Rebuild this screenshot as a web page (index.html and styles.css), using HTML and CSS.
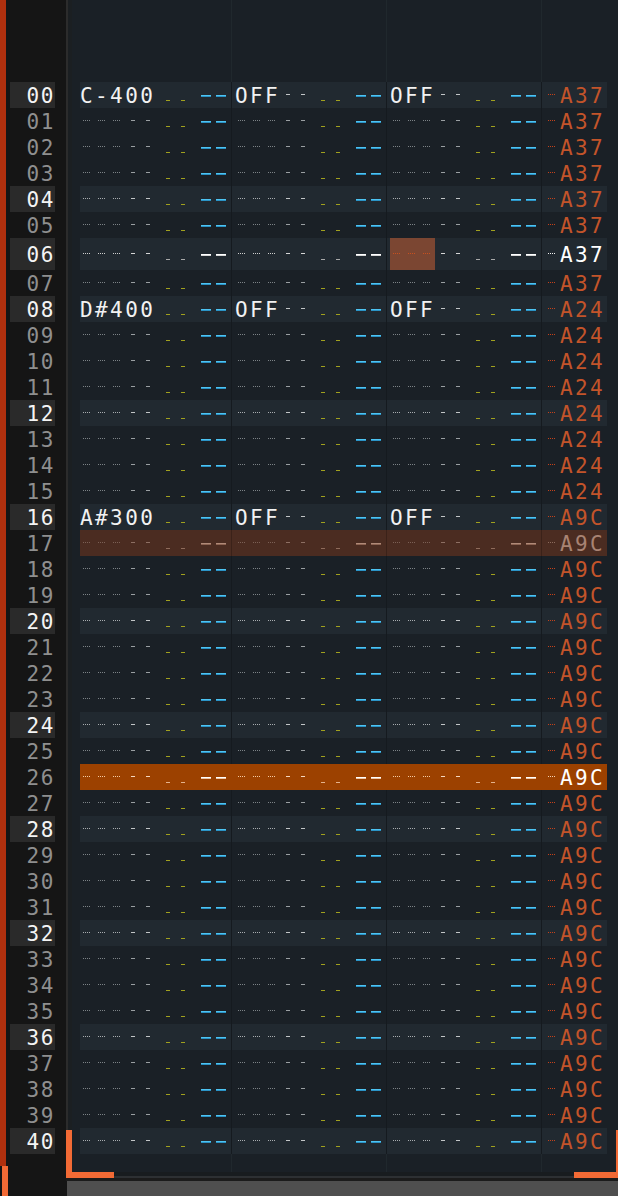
FILE: index.html
```html
<!DOCTYPE html>
<html>
<head>
<meta charset="utf-8">
<link rel="stylesheet" href="styles.css">
</head>
<body>
<div class="app">
  <div class="leftbar"><div class="red"></div><div class="orange"></div></div>
  <div class="rownums">
    <div class="rn hl">00</div><div class="rn">01</div><div class="rn">02</div><div class="rn">03</div>
    <div class="rn hl">04</div><div class="rn">05</div><div class="rn hl tall">06</div><div class="rn">07</div>
    <div class="rn hl">08</div><div class="rn">09</div><div class="rn">10</div><div class="rn">11</div>
    <div class="rn hl">12</div><div class="rn">13</div><div class="rn">14</div><div class="rn">15</div>
    <div class="rn hl">16</div><div class="rn">17</div><div class="rn">18</div><div class="rn">19</div>
    <div class="rn hl">20</div><div class="rn">21</div><div class="rn">22</div><div class="rn">23</div>
    <div class="rn hl">24</div><div class="rn">25</div><div class="rn">26</div><div class="rn">27</div>
    <div class="rn hl">28</div><div class="rn">29</div><div class="rn">30</div><div class="rn">31</div>
    <div class="rn hl">32</div><div class="rn">33</div><div class="rn">34</div><div class="rn">35</div>
    <div class="rn hl">36</div><div class="rn">37</div><div class="rn">38</div><div class="rn">39</div>
    <div class="rn hl">40</div>
  </div>
  <div class="right">
    <div class="main">
      <div class="divider"></div>
      <div class="gutter"></div>
      <div class="pattern">
        <div class="row hl"><div class="c1 n">C-400</div><div class="c o">OFF</div><div class="c o">OFF</div><div class="fx">A37</div></div>
        <div class="row"><div class="c1 e"></div><div class="c e"></div><div class="c e"></div><div class="fx">A37</div></div>
        <div class="row"><div class="c1 e"></div><div class="c e"></div><div class="c e"></div><div class="fx">A37</div></div>
        <div class="row"><div class="c1 e"></div><div class="c e"></div><div class="c e"></div><div class="fx">A37</div></div>
        <div class="row hl"><div class="c1 e"></div><div class="c e"></div><div class="c e"></div><div class="fx">A37</div></div>
        <div class="row"><div class="c1 e"></div><div class="c e"></div><div class="c e"></div><div class="fx">A37</div></div>
        <div class="row cur"><div class="c1 e"></div><div class="c e"></div><div class="c e cursor"></div><div class="fx">A37</div></div>
        <div class="row"><div class="c1 e"></div><div class="c e"></div><div class="c e"></div><div class="fx">A37</div></div>
        <div class="row hl"><div class="c1 n">D#400</div><div class="c o">OFF</div><div class="c o">OFF</div><div class="fx">A24</div></div>
        <div class="row"><div class="c1 e"></div><div class="c e"></div><div class="c e"></div><div class="fx">A24</div></div>
        <div class="row"><div class="c1 e"></div><div class="c e"></div><div class="c e"></div><div class="fx">A24</div></div>
        <div class="row"><div class="c1 e"></div><div class="c e"></div><div class="c e"></div><div class="fx">A24</div></div>
        <div class="row hl"><div class="c1 e"></div><div class="c e"></div><div class="c e"></div><div class="fx">A24</div></div>
        <div class="row"><div class="c1 e"></div><div class="c e"></div><div class="c e"></div><div class="fx">A24</div></div>
        <div class="row"><div class="c1 e"></div><div class="c e"></div><div class="c e"></div><div class="fx">A24</div></div>
        <div class="row"><div class="c1 e"></div><div class="c e"></div><div class="c e"></div><div class="fx">A24</div></div>
        <div class="row hl"><div class="c1 n">A#300</div><div class="c o">OFF</div><div class="c o">OFF</div><div class="fx">A9C</div></div>
        <div class="row sel"><div class="c1 e"></div><div class="c e"></div><div class="c e"></div><div class="fx">A9C</div></div>
        <div class="row"><div class="c1 e"></div><div class="c e"></div><div class="c e"></div><div class="fx">A9C</div></div>
        <div class="row"><div class="c1 e"></div><div class="c e"></div><div class="c e"></div><div class="fx">A9C</div></div>
        <div class="row hl"><div class="c1 e"></div><div class="c e"></div><div class="c e"></div><div class="fx">A9C</div></div>
        <div class="row"><div class="c1 e"></div><div class="c e"></div><div class="c e"></div><div class="fx">A9C</div></div>
        <div class="row"><div class="c1 e"></div><div class="c e"></div><div class="c e"></div><div class="fx">A9C</div></div>
        <div class="row"><div class="c1 e"></div><div class="c e"></div><div class="c e"></div><div class="fx">A9C</div></div>
        <div class="row hl"><div class="c1 e"></div><div class="c e"></div><div class="c e"></div><div class="fx">A9C</div></div>
        <div class="row"><div class="c1 e"></div><div class="c e"></div><div class="c e"></div><div class="fx">A9C</div></div>
        <div class="row play"><div class="c1 e"></div><div class="c e"></div><div class="c e"></div><div class="fx">A9C</div></div>
        <div class="row"><div class="c1 e"></div><div class="c e"></div><div class="c e"></div><div class="fx">A9C</div></div>
        <div class="row hl"><div class="c1 e"></div><div class="c e"></div><div class="c e"></div><div class="fx">A9C</div></div>
        <div class="row"><div class="c1 e"></div><div class="c e"></div><div class="c e"></div><div class="fx">A9C</div></div>
        <div class="row"><div class="c1 e"></div><div class="c e"></div><div class="c e"></div><div class="fx">A9C</div></div>
        <div class="row"><div class="c1 e"></div><div class="c e"></div><div class="c e"></div><div class="fx">A9C</div></div>
        <div class="row hl"><div class="c1 e"></div><div class="c e"></div><div class="c e"></div><div class="fx">A9C</div></div>
        <div class="row"><div class="c1 e"></div><div class="c e"></div><div class="c e"></div><div class="fx">A9C</div></div>
        <div class="row"><div class="c1 e"></div><div class="c e"></div><div class="c e"></div><div class="fx">A9C</div></div>
        <div class="row"><div class="c1 e"></div><div class="c e"></div><div class="c e"></div><div class="fx">A9C</div></div>
        <div class="row hl"><div class="c1 e"></div><div class="c e"></div><div class="c e"></div><div class="fx">A9C</div></div>
        <div class="row"><div class="c1 e"></div><div class="c e"></div><div class="c e"></div><div class="fx">A9C</div></div>
        <div class="row"><div class="c1 e"></div><div class="c e"></div><div class="c e"></div><div class="fx">A9C</div></div>
        <div class="row"><div class="c1 e"></div><div class="c e"></div><div class="c e"></div><div class="fx">A9C</div></div>
        <div class="row hl"><div class="c1 e"></div><div class="c e"></div><div class="c e"></div><div class="fx">A9C</div></div>
      </div>
    </div>
    <div class="band band1"></div>
    <div class="band band2"></div>
    <div class="band band3"></div>
    <div class="scroll"></div>
    <div class="corner corner-bl"></div>
    <div class="corner corner-br"></div>
  </div>
</div>
</body>
</html>
```
FILE: styles.css
```css
* { box-sizing: border-box; }
html, body { margin: 0; padding: 0; }
body {
  width: 618px;
  height: 1196px;
  overflow: hidden;
  background: #151515;
  font-family: "DejaVu Sans Mono", "Liberation Mono", monospace;
}
.app { display: flex; height: 1196px; }

.leftbar { width: 8px; display: flex; flex-direction: column; }
.leftbar .red { flex: 1; background: linear-gradient(90deg, #b0300e 0 6px, #151515 6px); }
.leftbar .orange { height: 30px; background: linear-gradient(90deg, #151515 0 2px, #f26a35 2px 8px); }

.rownums { width: 58px; padding-top: 82px; padding-left: 2px; background: #151515; }
.rn {
  width: 45px;
  height: 26px;
  padding-top: 1px;
  line-height: 26px;
  text-align: right;
  font-size: 21px;
  letter-spacing: 1.6px;
  color: #8f8f8f;
}
.rn.hl { background: #2a2a2a; color: #f4f4f4; }
.rn.tall { height: 32px; line-height: 32px; }

.right { flex: 1; display: flex; flex-direction: column; position: relative; }
.main { flex: 1; display: flex; min-height: 0; }
.divider { width: 2px; background: #2c2c2c; }
.gutter { width: 4px; background: #1b1f22; }
.pattern {
  flex: 1;
  padding-top: 82px;
  padding-left: 8px;
  background:
    linear-gradient(#20282d, #20282d) 159px 0 / 1px 100% no-repeat,
    linear-gradient(#20282d, #20282d) 314px 0 / 1px 100% no-repeat,
    linear-gradient(#20282d, #20282d) 469px 0 / 1px 100% no-repeat,
    #1a2026;
}

.row {
  --bg: transparent;
  --sep: #151a1f;
  --t: 0px;
  --cdot: #7d8387;
  --cdash: #9a9fa2;
  --cvol: #a0a01e;
  --cfx1: #4ec4f2;
  --cfx2: #2b93c6;
  --cfxt: #c3542a;
  --cfxd: #c4421a;
  display: flex;
  width: 527px;
  height: 26px;
  line-height: 26px;
  background: var(--bg);
  font-size: 21px;
  letter-spacing: 2.4px;
  white-space: nowrap;
}
.row.hl { --bg: #212930; --cdot: #a9adb0; --cdash: #c2c5c7; }
.row.cur {
  --bg: #212930; --t: 3px;
  --cdot: #cfcfcf; --cdash: #d6d6d6; --cvol: #a9a9a9;
  --cfx1: #ffffff; --cfx2: #d8d8d8; --cfxt: #ffffff; --cfxd: #f2f2f2;
  height: 32px; line-height: 32px;
}
.row.sel {
  --bg: #4b2c21; --sep: #3b2219;
  --cdot: #7b6055; --cdash: #8d6f63; --cvol: #8e6b5b;
  --cfx1: #b08a78; --cfx2: #8c6352; --cfxt: #a88373; --cfxd: #8c6b5c;
}
.row.play {
  --bg: #9c4100; --sep: #9c4100;
  --cdot: #f4caa4; --cdash: #f6d8bf; --cvol: #e4b28c;
  --cfx1: #ffffff; --cfx2: #efc6a6; --cfxt: #ffffff; --cfxd: #f4d3b6;
}

.c1, .c {
  height: 100%;
  padding-top: 1px;
  color: #f2f2f2;
  --Ldots:
    repeating-linear-gradient(90deg, var(--cdot) 0 1px, transparent 1px 2px) calc(var(--o) + 6px) calc(var(--t) + 12px) / 7px 1px no-repeat,
    repeating-linear-gradient(90deg, var(--cdot) 0 1px, transparent 1px 2px) calc(var(--o) + 21px) calc(var(--t) + 12px) / 7px 1px no-repeat,
    repeating-linear-gradient(90deg, var(--cdot) 0 1px, transparent 1px 2px) calc(var(--o) + 36px) calc(var(--t) + 12px) / 7px 1px no-repeat;
  --Lins:
    linear-gradient(var(--cdash), var(--cdash)) calc(var(--o) + 54px) calc(var(--t) + 12px) / 4px 1px no-repeat,
    linear-gradient(var(--cdash), var(--cdash)) calc(var(--o) + 69px) calc(var(--t) + 12px) / 4px 1px no-repeat;
  --Lvol:
    linear-gradient(var(--cvol), var(--cvol)) calc(var(--o) + 89px) calc(var(--t) + 18px) / 4px 1px no-repeat,
    linear-gradient(var(--cvol), var(--cvol)) calc(var(--o) + 104px) calc(var(--t) + 18px) / 4px 1px no-repeat;
  --Lfx:
    linear-gradient(var(--cfx1) 50%, var(--cfx2) 50%) calc(var(--o) + 124px) calc(var(--t) + 13px) / 10px 2px no-repeat,
    linear-gradient(var(--cfx1) 50%, var(--cfx2) 50%) calc(var(--o) + 139px) calc(var(--t) + 13px) / 10px 2px no-repeat;
}
.c1 { width: 151px; --o: -3px; }
.c { width: 155px; border-left: 1px solid var(--sep); --o: 0px; padding-left: 3px; }

.e { background: var(--Ldots), var(--Lins), var(--Lvol), var(--Lfx); }
.n { background: var(--Lvol), var(--Lfx); }
.o { background: var(--Lins), var(--Lvol), var(--Lfx); }
.e.cursor {
  --cdot: #c8501e;
  background: var(--Ldots), var(--Lins), var(--Lvol), var(--Lfx),
    linear-gradient(#7b4632, #7b4632) 3px 0 / 45px 100% no-repeat;
}

.fx {
  width: 66px;
  height: 100%;
  padding-top: 1px;
  border-left: 1px solid var(--sep);
  padding-left: 18px;
  color: var(--cfxt);
  background: repeating-linear-gradient(90deg, var(--cfxd) 0 1px, transparent 1px 2px) 6px calc(var(--t) + 12px) / 7px 1px no-repeat;
}

.band1 { height: 4px; background: #181c1f; }
.band2 { height: 2px; background: #2d3033; }
.band3 { height: 3px; background: #1b1b1b; }
.scroll { height: 15px; margin-left: 1px; background: #4f4f4f; }

.corner {
  position: absolute;
  bottom: 18px;
  width: 48px;
  height: 48px;
  border-bottom: 6px solid #f26a35;
}
.corner-bl { left: 0; border-left: 6px solid #f26a35; }
.corner-br { right: -4px; border-right: 6px solid #f26a35; }
```
